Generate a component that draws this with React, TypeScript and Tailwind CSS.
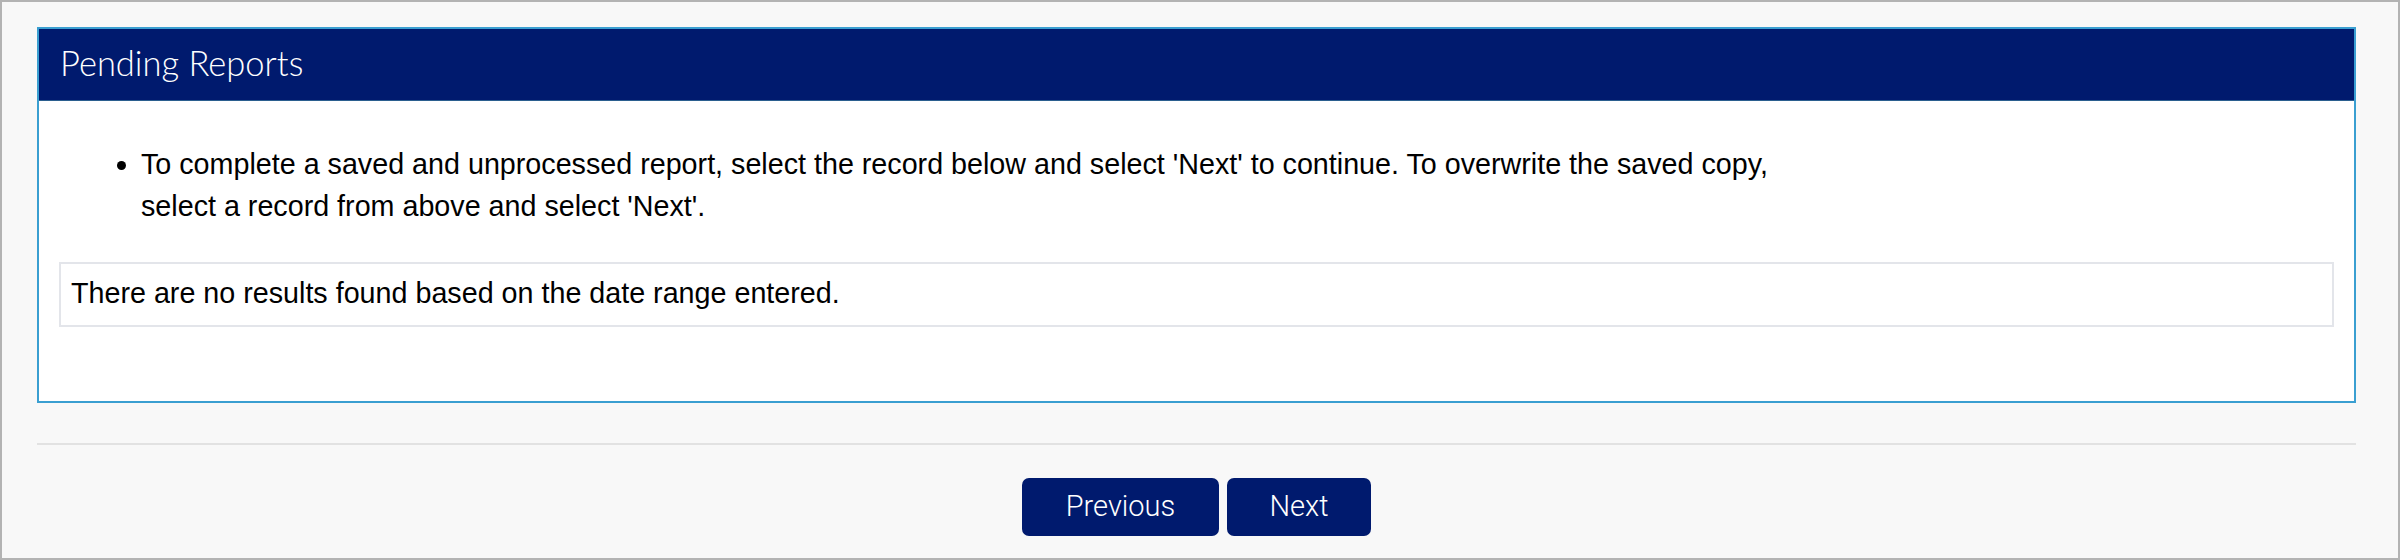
import React from 'react';

export default function App() {
  return (
    <div className="h-[560px] w-full border-2 border-[#b3b3b3] bg-[#f8f8f8] pl-[35px] pr-[42px] pt-[25px]">
      <section className="border-2 border-[#3a9fd1] bg-white">
        <div className="h-[72px] border-b border-[#2b5f8f] bg-[#001a6e] pl-[21px] pt-[9px]">
          <h2 className="font-['Lato',sans-serif] text-[34.5px] font-light leading-[50px] text-white">
            Pending Reports
          </h2>
        </div>
        <div className="px-[20px] pt-[42px] pb-[74px] font-['Liberation_Sans',Arial,sans-serif] text-[28.7px] leading-[42px] text-black">
          <ul className="list-disc pl-[82px]">
            <li>
              To complete a saved and unprocessed report, select the record below and select 'Next' to continue. To overwrite the saved copy,
              <br />
              select a record from above and select 'Next'.
            </li>
          </ul>
          <div className="mt-[35px] border-2 border-[#e3e5ea] px-[10px] pt-[8px] pb-[11px]">
            There are no results found based on the date range entered.
          </div>
        </div>
      </section>

      <hr className="mt-[40px] border-t-2 border-[#e2e2e2]" />

      <div className="mt-[33px] flex justify-center gap-[8px]">
        <button className="h-[58px] w-[197px] rounded-[7px] bg-[#001a6e] font-['Roboto',sans-serif] text-[29px] font-light text-white">
          Previous
        </button>
        <button className="h-[58px] w-[144px] rounded-[7px] bg-[#001a6e] font-['Roboto',sans-serif] text-[29px] font-light text-white">
          Next
        </button>
      </div>
    </div>
  );
}
